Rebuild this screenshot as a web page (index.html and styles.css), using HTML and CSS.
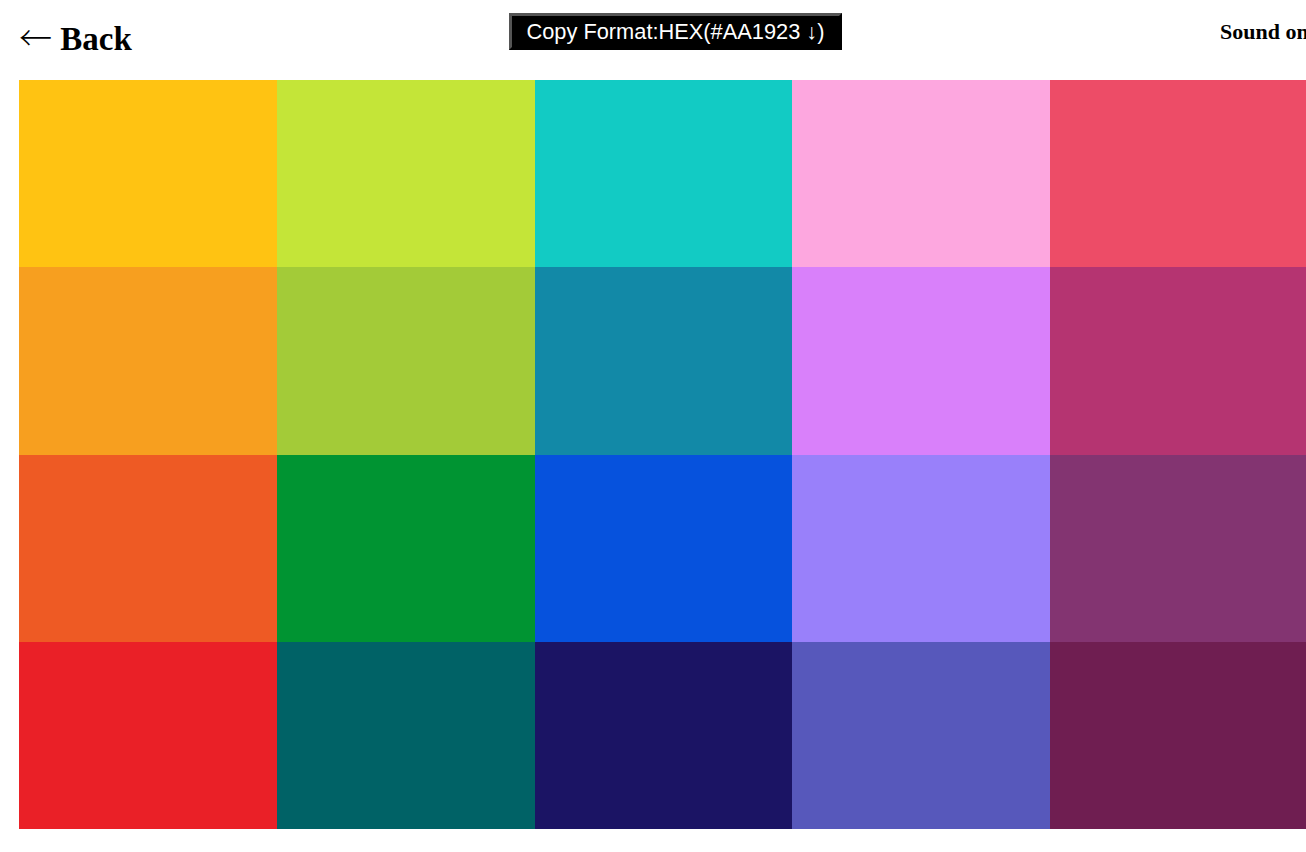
FILE: index.html
```html
<!DOCTYPE html>
<html>
<head>
<meta charset="utf-8">
<link rel="stylesheet" href="styles.css">
</head>
<body>
<header class="top">
  <a class="back" href="#"><span class="arrow">←</span> Back</a>
  <button class="copy">Copy Format:HEX(#AA1923 ↓)</button>
  <span class="sound">Sound on</span>
</header>
<main class="palette">
  <div class="sw" style="background:#FFC312"></div>
  <div class="sw" style="background:#C4E538"></div>
  <div class="sw" style="background:#12CBC4"></div>
  <div class="sw" style="background:#FDA7DF"></div>
  <div class="sw" style="background:#ED4C67"></div>
  <div class="sw" style="background:#F79F1F"></div>
  <div class="sw" style="background:#A3CB38"></div>
  <div class="sw" style="background:#1289A7"></div>
  <div class="sw" style="background:#D980FA"></div>
  <div class="sw" style="background:#B53471"></div>
  <div class="sw" style="background:#EE5A24"></div>
  <div class="sw" style="background:#009432"></div>
  <div class="sw" style="background:#0652DD"></div>
  <div class="sw" style="background:#9980FA"></div>
  <div class="sw" style="background:#833471"></div>
  <div class="sw" style="background:#EA2027"></div>
  <div class="sw" style="background:#006266"></div>
  <div class="sw" style="background:#1B1464"></div>
  <div class="sw" style="background:#5758BB"></div>
  <div class="sw" style="background:#6F1E51"></div>
</main>
</body>
</html>
```
FILE: styles.css
```css
html, body {
  margin: 0;
  padding: 0;
  background: #fff;
  overflow: hidden;
}
body {
  width: 1306px;
  height: 852px;
  font-family: "Liberation Serif", "Times New Roman", serif;
}
.top {
  display: grid;
  grid-template-columns: 490px 333px 1fr;
  height: 80px;
  padding-left: 19px;
  box-sizing: border-box;
}
.back {
  font-size: 33px;
  font-weight: bold;
  color: #000;
  text-decoration: none;
  line-height: 1;
  padding-top: 20px;
  white-space: nowrap;
}
.arrow {
  font-family: "Noto Sans CJK JP", sans-serif;
  font-weight: 300;
}
.copy {
  margin-top: 13px;
  height: 37px;
  width: 333px;
  box-sizing: border-box;
  background: #000;
  color: #fff;
  font-family: "Liberation Sans", Arial, sans-serif;
  font-size: 21.8px;
  padding: 0 4px;
  border-style: solid;
  border-width: 3px;
  border-color: #555 #000 #000 #555;
  white-space: nowrap;
  line-height: 1;
}
.sound {
  font-size: 22px;
  font-weight: bold;
  white-space: nowrap;
  padding-left: 378px;
  padding-top: 21px;
  line-height: 1;
}
.palette {
  display: grid;
  grid-template-columns: repeat(5, 257.8px);
  grid-template-rows: repeat(4, 187.25px);
  margin-left: 19px;
}
```
